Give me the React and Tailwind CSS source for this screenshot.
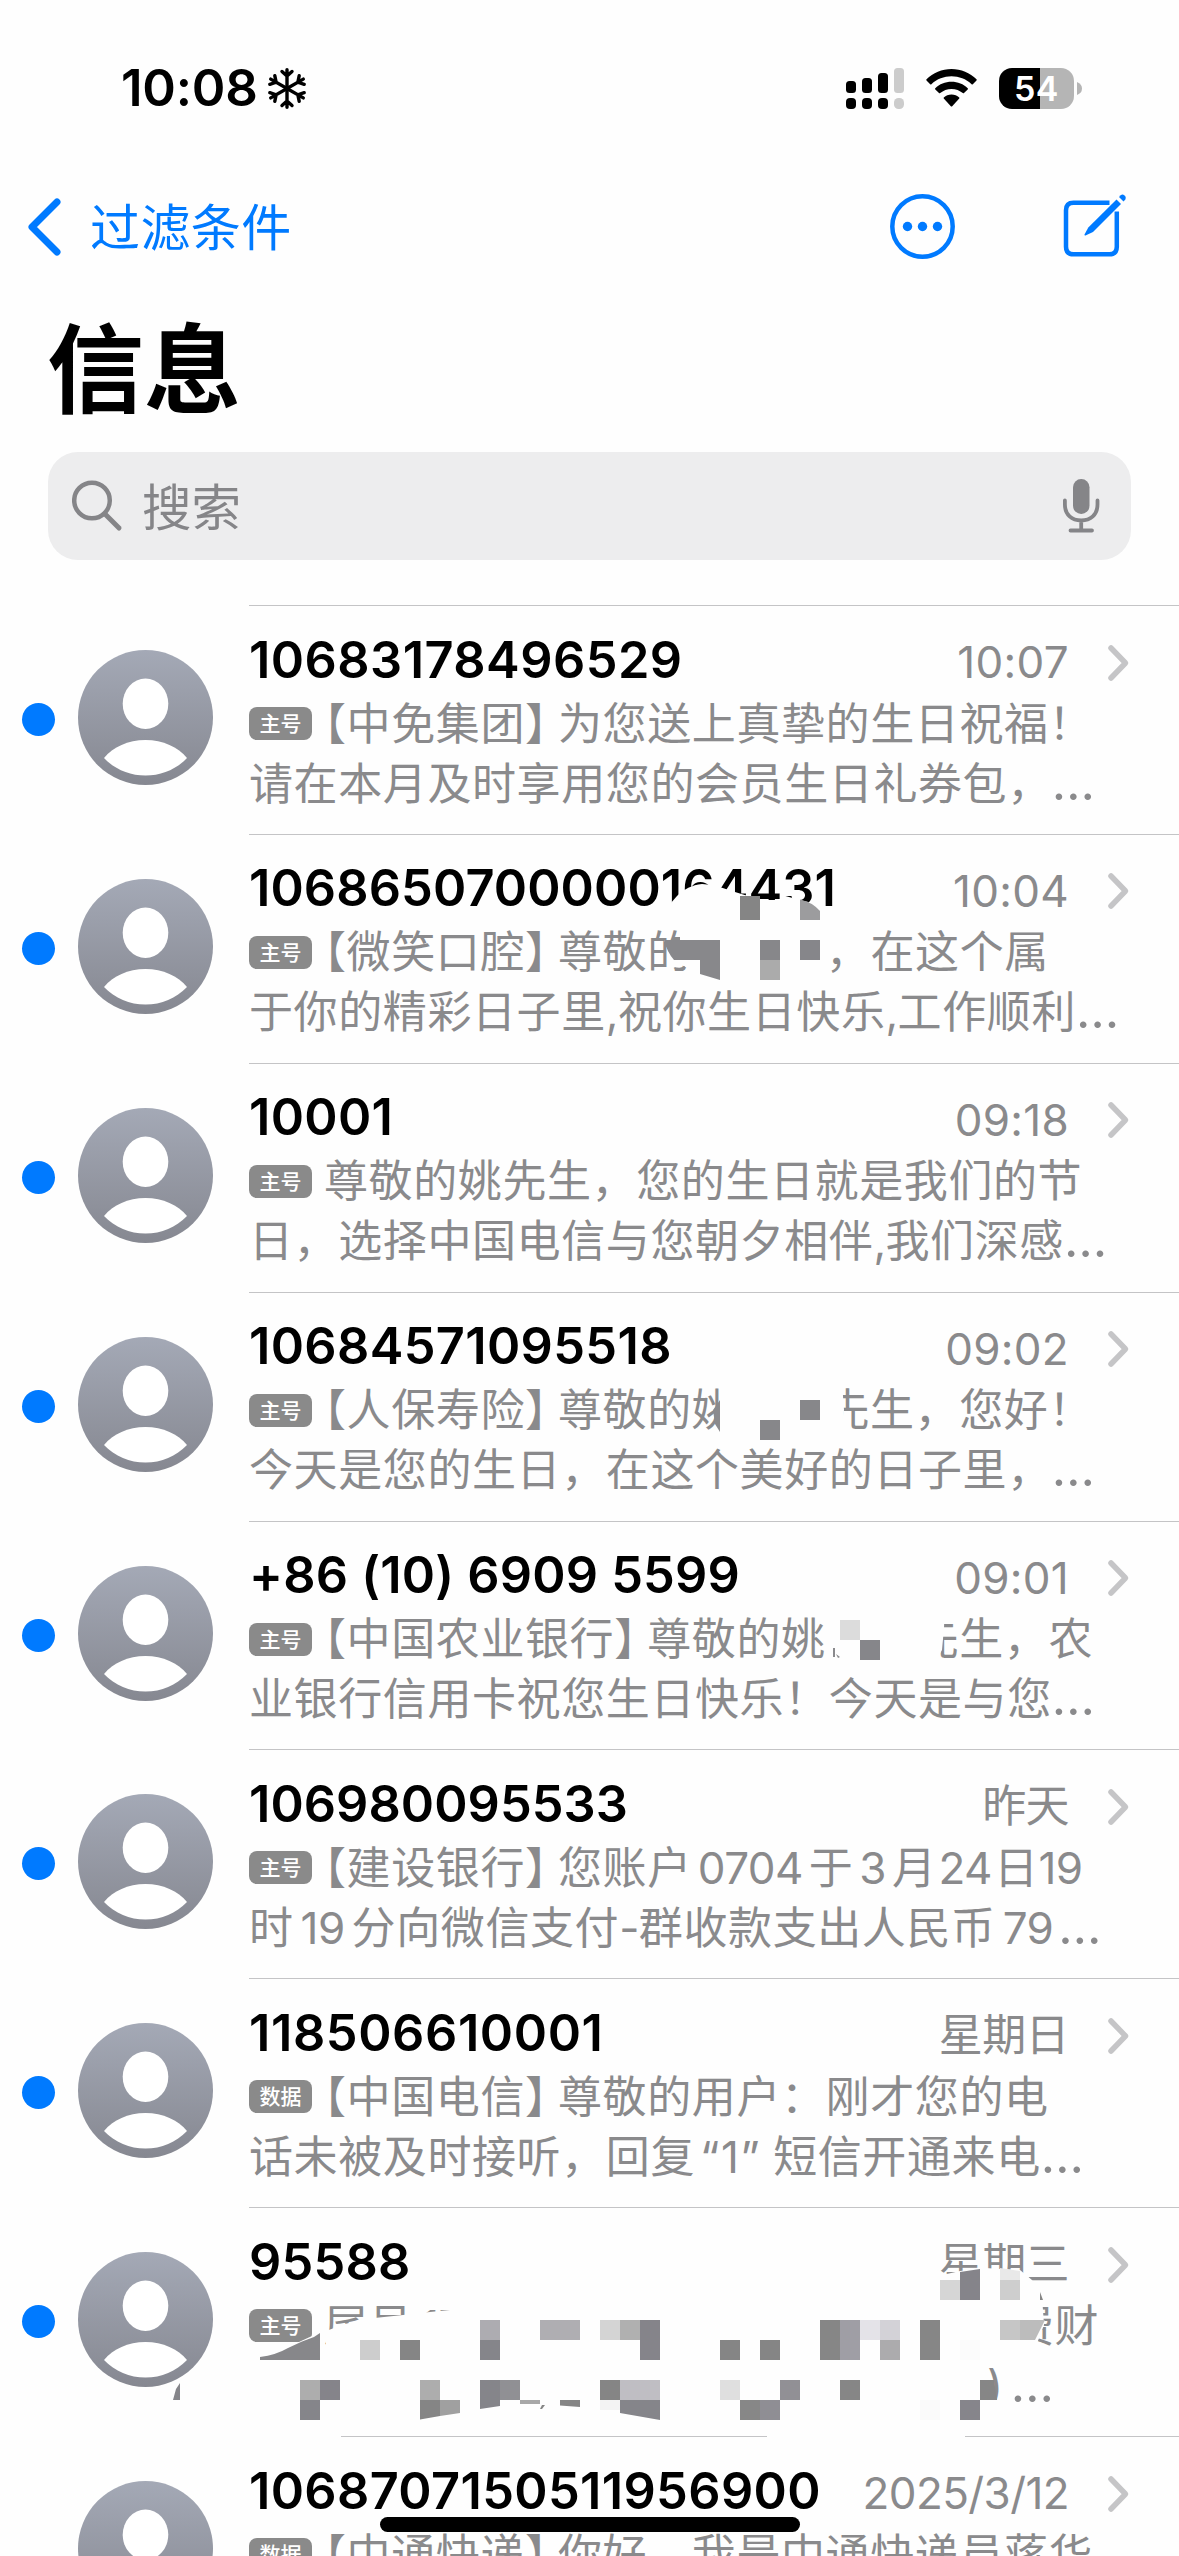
import React from "react";

const Cjk = ({ className = "", children }) => <span className={className}>{children}</span>;
// Latin digits inside a preview line, with a little air on both sides
const Num = ({ className = "", children }) => (
  <span className={"tracking-[-0.6px] " + className}>{children}</span>
);
const Gap = ({ className }) => <span className={"inline-block h-px " + className} />;
const Sender = ({ children }) => (
  <span className="-ml-[10px]">
    【{children}
    <span className="tracking-[-11px]">】</span>
  </span>
);
const More = () => <span className="text-[50px] leading-[0px]">…</span>;

const messages = [
  {
    name: "10683178496529",
    fit: "tracking-[0.45px]",
    time: "10:07",
    tag: "主号",
    first: <><Sender>中免集团</Sender>为您送上真挚的生日祝福！</>,
    second: <>请在本月及时享用您的会员生日礼券包，<More /></>,
  },
  {
    name: "1068650700000164431",
    fit: "tracking-[0.1px]",
    time: "10:04",
    tag: "主号",
    first: <><Sender>微笑口腔</Sender>尊敬的<Gap className="w-[134px]" />，在这个属</>,
    second: <>于你的精彩日子里<Num>,</Num>祝你生日快乐<Num>,</Num>工作顺利<More /></>,
  },
  {
    name: "10001",
    fit: "tracking-[0.3px]",
    time: "09:18",
    tag: "主号",
    first: <Cjk className="ml-[12px]">尊敬的姚先生，您的生日就是我们的节</Cjk>,
    second: <>日，选择中国电信与您朝夕相伴<Num>,</Num>我们深感<More /></>,
  },
  {
    name: "10684571095518",
    fit: "tracking-[0.35px]",
    time: "09:02",
    tag: "主号",
    first: <><Sender>人保寿险</Sender>尊敬的姚<Gap className="w-[89px]" />先生，您好！</>,
    second: <>今天是您的生日，在这个美好的日子里，<More /></>,
  },
  {
    name: "+86 (10) 6909 5599",
    fit: "tracking-[0.2px]",
    time: "09:01",
    tag: "主号",
    first: <><Sender>中国农业银行</Sender>尊敬的姚<Gap className="w-[89px]" />先生，农</>,
    second: <>业银行信用卡祝您生日快乐！今天是与您<More /></>,
  },
  {
    name: "106980095533",
    fit: "tracking-[0.05px]",
    time: "昨天",
    tag: "主号",
    first: <><Sender>建设银行</Sender>您账户<Num className="ml-[6px] mr-[6px]">0704</Num>于<Num className="mx-[6px]">3</Num>月<Num className="mx-[2px]">24</Num>日<Num>19</Num></>,
    second: <>时<Num className="mx-[7px]">19</Num>分向微信支付<Num>-</Num>群收款支出人民币<Num className="ml-[7px] mr-[5px]">79</Num><More /></>,
  },
  {
    name: "118506610001",
    fit: "tracking-[0.6px]",
    time: "星期日",
    tag: "数据",
    first: <><Sender>中国电信</Sender>尊敬的用户：刚才您的电</>,
    second: <>话未被及时接听，回复<span className="ml-[5px] mr-[12px] tracking-[1.5px]">“1”</span>短信开通来电<More /></>,
  },
  {
    name: "95588",
    fit: "tracking-[0.2px]",
    time: "星期三",
    tag: "主号",
    first: <><Cjk className="ml-[12px]">尾号</Cjk><Num className="ml-[8px]">17</Num><Gap className="w-[547px]" />费财</>,
    second: <><Gap className="w-[738px]" />)<Gap className="w-[7px]" /><More /></>,
  },
  {
    name: "1068707150511956900",
    fit: "tracking-[0.35px]",
    time: "2025/3/12",
    tag: "数据",
    read: true,
    first: <><Sender>中通快递</Sender>你好，我是中通快递员蒋华</>,
    second: null,
  },
];

function Avatar({ id }) {
  return (
    <svg className="ml-[23px] mt-[45px] h-[135px] w-[135px] shrink-0" viewBox="0 0 135 135">
      <defs>
        <linearGradient id={id} x1="0" y1="0" x2="0" y2="1">
          <stop offset="0" stopColor="#a4a9b6" />
          <stop offset="1" stopColor="#868891" />
        </linearGradient>
      </defs>
      <circle cx="67.5" cy="67.5" r="67.5" fill={`url(#${id})`} />
      <ellipse cx="67.5" cy="53.8" rx="22.8" ry="25.2" fill="#fff" />
      <path d="M26 108C35 97 50 90 67.5 90S100 97 109 108C98 119.500 83.500 125.500 67.500 125.500S37 119.500 26 108Z" fill="#fff" />
    </svg>
  );
}

function Row({ m, index }) {
  return (
    <li className="flex h-[228.9px] shrink-0">
      <div className="flex h-full w-[55px] shrink-0 items-center pl-[22px]">
        {!m.read && <span className="h-[33px] w-[33px] rounded-full bg-[#007aff]" />}
      </div>
      <Avatar id={"avatar" + index} />
      <div className="ml-[36px] min-w-0 flex-1 border-t border-[#c4c4c6] pt-[23.5px]">
        <div className="flex h-[60px] items-center">
          <h2 className={"flex-1 whitespace-nowrap text-[50.500px] font-semibold leading-[60px] text-black " + m.fit}>{m.name}</h2>
          <time className={"relative top-[2.500px] whitespace-nowrap text-[44px] leading-[60px] " + (m.time.includes(":") ? "tracking-[0.3px]" : "tracking-[-0.6px]")}>{m.time}</time>
          <svg className="relative top-[3px] ml-[38px] mr-[49px] h-[38px] w-[23px]" viewBox="0 0 23 38" fill="none" stroke="#c5c5c7" strokeWidth="5.500" strokeLinecap="round" strokeLinejoin="round">
            <path d="M4 4L18.500 19L4 34" />
          </svg>
        </div>
        <div className="mt-[4px] flex h-[60px] items-center whitespace-nowrap leading-[60px]">
          <span className="flex h-[33px] w-[63px] shrink-0 items-center justify-center rounded-[8px] bg-[#8a8a8a] text-[21px] font-medium leading-[33px] tracking-normal text-white">{m.tag}</span>
          <p className="whitespace-pre">{m.first}</p>
        </div>
        <p className="h-[60px] whitespace-pre leading-[60px]">{m.second}</p>
      </div>
    </li>
  );
}

const cells = [
  [740, 896, 20, 24, "#858585"], [760, 940, 20, 20, "#87878a"], [760, 960, 20, 20, "#ababab"], [800, 940, 20, 20, "#86868a"],
  [760, 1420, 20, 20, "#87878a"], [800, 1400, 20, 20, "#87878a"],
  [840, 1620, 20, 20, "#dcdcdc"], [860, 1640, 20, 20, "#86868a"],
  [360, 2340, 20, 20, "#cdcdcd"], [400, 2340, 20, 20, "#858585"], [480, 2320, 20, 20, "#adacb1"], [480, 2340, 20, 20, "#85858a"],
  [540, 2320, 40, 20, "#afaeb2"], [600, 2320, 20, 20, "#d4d4d4"], [620, 2320, 20, 20, "#b0b0b0"], [640, 2320, 20, 40, "#85848a"],
  [300, 2380, 20, 20, "#adadad"], [320, 2380, 20, 20, "#85848a"], [300, 2400, 20, 20, "#85858a"], [420, 2380, 20, 20, "#adadad"],
  [500, 2380, 20, 20, "#909094"], [520, 2400, 20, 4, "#a8a8a8"], [600, 2380, 20, 20, "#858585"], [620, 2380, 40, 20, "#bfbec3"],
  [600, 2400, 20, 10, "#f3f3f3"], [940, 2280, 20, 20, "#d6d6d6"], [1000, 2280, 20, 20, "#cecece"],
  [720, 2340, 20, 20, "#858585"], [760, 2340, 20, 20, "#858585"], [820, 2320, 20, 40, "#868686"], [840, 2320, 20, 40, "#9f9ea5"],
  [860, 2320, 20, 20, "#e4e3e8"], [880, 2320, 20, 20, "#d3d2d7"], [880, 2340, 20, 20, "#acabad"], [920, 2320, 20, 40, "#868686"],
  [1000, 2320, 20, 20, "#c6c6c6"], [720, 2380, 20, 20, "#dfdfdf"], [780, 2380, 20, 20, "#919095"], [740, 2400, 20, 20, "#878787"],
  [760, 2400, 20, 20, "#8f8e94"], [840, 2380, 20, 20, "#868686"], [960, 2400, 20, 20, "#86858b"],
  [960, 2340, 20, 20, "#fbfbfb"], [920, 2400, 20, 20, "#fafafa"],
];

// Hand-painted pixelation that hides private parts of some previews
function Pixelation() {
  return (
    <svg className="pointer-events-none absolute left-0 top-0 h-[2556px] w-[1179px]" viewBox="0 0 1179 2556">
      <g fill="#fefefe">
        <path d="M670 904L677 896C684 889 692 885 702 884C716 885 726 889 735 892L748 896V900H780L782 895L796 899L808 902L813 908V935H826V985H720L700 974L675 962L664 940H680V925H670Z" />
        <path d="M720 1382H842L844 1410L839 1446H720Z" />
        <path d="M828 1600H945L944 1628L942 1650L934 1664H828Z" />
        <path d="M326 2331L345 2324L365 2319L403 2315L430 2312L470 2308V2350H326Z" />
        <path d="M938 2276L960 2271L985 2268L1020 2270L1032 2280L1042 2296L1044 2325L1036 2346H1000V2300H938Z" />
        <path d="M980 2400H1004V2412H980Z" />
        <path d="M240 2432H341V2440H240ZM767 2432H965V2440H767Z" />
        <path d="M262 2357L280 2353L300 2341.500L312 2336L322 2331V2345H262Z" />
      </g>
      {cells.map(([x, y, w, h, fill]) => (
        <rect key={x + "-" + y} x={x} y={y} width={w} height={h} fill={fill} />
      ))}
      <path fill="#9c9c9e" d="M800 899.500Q812 902 820 911V920H800Z" />
      <path fill="#88888b" d="M664 940H720V980L700 974V960H674Q667 952 664 940Z" />
      <path fill="#8a8a8d" d="M674 967Q681 969 685 966L684 970Q678 972 674 967ZM713 1410L720 1400V1432L715 1424ZM833 1648L835 1648V1657L833 1657ZM836 1654L840 1657L838 1658Z" />
      <path fill="#87878a" d="M260 2357Q276 2355 288 2348L302 2341.500L314 2337L320 2333V2360H260Z" />
      <path fill="#858585" d="M420 2400H440V2416L420 2419.500ZM560 2400H580V2407L560 2405.500ZM545 2405L542 2409H540L542 2405Z" />
      <path fill="#a0a0a0" d="M440 2400H460V2413L440 2416Z" />
      <path fill="#85858a" d="M480 2380H500V2406L480 2409ZM620 2400H660V2420L620 2413ZM173 2400L176 2389L180 2383V2400Z" />
      <path fill="#85848a" d="M960 2272L980 2269V2300H960Z" />
      <path fill="#e9e9e9" d="M1000 2268L1020 2271V2280H1000Z" />
      <path fill="#bcbcbc" d="M1020 2320H1045L1035 2340H1020Z" />
      <path fill="#868686" d="M980 2380H994L997 2400H980ZM1040 2292L1043 2300H1040Z" />
    </svg>
  );
}

function StatusBar() {
  return (
    <div className="flex h-[176px] items-center">
      <div className="ml-[121px] w-[141px] whitespace-nowrap text-[51px] font-semibold leading-[60px] tracking-[-0.2px] text-black">10:08</div>
      <svg className="ml-[5px] h-[43px] w-[40px]" viewBox="-20 -21.500 40 43" fill="none" stroke="#000" strokeWidth="3.400" strokeLinecap="round" strokeLinejoin="round">
        {[0, 60, 120, 180, 240, 300].map((a) => (
          <path key={a} transform={`rotate(${a})`} d="M0 0V-18.800M-5 -17L0 -12.500L5 -17" />
        ))}
      </svg>
      <svg className="ml-[539px] h-[41px] w-[58px]" viewBox="0 0 58 41">
        <rect x="0" y="13" width="10" height="12" rx="3.500" />
        <rect x="16" y="10" width="10" height="15" rx="3.500" />
        <rect x="32" y="5" width="10" height="20" rx="3.500" />
        <rect x="48" y="0" width="10" height="25" rx="3.500" fill="#ccc" />
        <rect x="0" y="30" width="10" height="11" rx="4" />
        <rect x="16" y="30" width="10" height="11" rx="4" />
        <rect x="32" y="30" width="10" height="11" rx="4" />
        <rect x="48" y="30" width="10" height="11" rx="4.500" fill="#ccc" />
      </svg>
      <svg className="ml-[22px] h-[38px] w-[51px]" viewBox="0 0 51 38">
        <path d="M25.500 0C35 0 44 3.800 50.500 10.200Q51 10.800 50.500 11.400L46.800 15.200Q46.200 15.700 45.600 15.200C40 10 33 7.300 25.500 7.300S11 10 5.400 15.200Q4.800 15.700 4.200 15.200L.5 11.400Q0 10.800.5 10.200C7 3.800 16 0 25.500 0Z" />
        <path d="M25.500 12.800C31.800 12.800 37.500 15.200 41.700 19.200Q42.300 19.800 41.700 20.400L38 24.100Q37.400 24.600 36.800 24.100C33.700 21.400 29.800 19.900 25.500 19.900S17.300 21.400 14.200 24.100Q13.600 24.600 13 24.100L9.300 20.400Q8.700 19.800 9.300 19.200C13.500 15.200 19.200 12.800 25.500 12.800Z" />
        <path d="M25.500 25.500C28.500 25.500 31.200 26.600 33.200 28.400Q33.700 29 33.200 29.600L26.200 37.200Q25.500 37.900 24.800 37.200L17.800 29.600Q17.300 29 17.800 28.400C19.800 26.600 22.500 25.500 25.500 25.500Z" />
      </svg>
      <div className="ml-[22px] flex h-[41px] w-[75px] items-center justify-center rounded-[13px] bg-[linear-gradient(90deg,#000_0_41px,#b5b5b5_41px)] text-[34px] font-semibold leading-[41px] text-white">54</div>
      <svg className="ml-[3px] h-[13px] w-[5px]" viewBox="0 0 5 13">
        <path d="M0 0Q5 2 5 6.500T0 13Z" fill="#b5b5b5" />
      </svg>
    </div>
  );
}

export default function App() {
  return (
    <main className="relative h-[2556px] w-[1179px] overflow-hidden bg-[#fefefe] font-['Inter','Noto_Sans_CJK_SC',sans-serif] text-[44px] tracking-[0.6px] text-[#8a8a8c]">
      <StatusBar />
      <nav className="flex h-[101px] items-center text-[#007aff]">
        <svg className="ml-[26px] h-[60px] w-[37px]" viewBox="0 0 37 60" fill="none" stroke="currentColor" strokeWidth="7" strokeLinecap="round" strokeLinejoin="round">
          <path d="M31 5L6 30L31 55" />
        </svg>
        <span className="ml-[27px] mt-[3px] text-[50px] leading-[60px] tracking-[0.4px]">过滤条件</span>
        <svg className="ml-auto h-[65px] w-[65px]" viewBox="0 0 65 65" fill="none" stroke="currentColor" strokeWidth="4.500">
          <circle cx="32.500" cy="32.500" r="30.200" />
          <g fill="currentColor" stroke="none">
            <circle cx="17.500" cy="32.500" r="4.700" />
            <circle cx="32.500" cy="32.500" r="4.700" />
            <circle cx="47.500" cy="32.500" r="4.700" />
          </g>
        </svg>
        <svg className="ml-[106px] mr-[50px] h-[66px] w-[68px]" viewBox="0 0 68 66">
          <path d="M48.500 8.800H12.500Q5 8.800 5 16.300V52.800Q5 60.300 12.500 60.300H48.300Q55.800 60.300 55.800 52.800V17.500" fill="none" stroke="currentColor" strokeWidth="4.500" />
          <path d="M55.500 5.500L60 10L32 38L24.500 41.500Q23.200 41.700 23.500 40.500L27.300 33.500Z" fill="currentColor" />
          <path d="M58 3L59.700 1.300Q61.500 -.2 63.500 1.500T64.300 5.500L62.500 7.500Z" fill="currentColor" />
        </svg>
      </nav>
      <h1 className="ml-[47px] h-[175px] text-[97px] font-bold leading-[186px] tracking-[0px] text-black">信息</h1>
      <div className="ml-[48px] flex h-[108px] w-[1083px] items-center rounded-[30px] bg-[#ededee] text-[#858588]">
        <svg className="ml-[24px] h-[52px] w-[52px]" viewBox="0 0 52 52" fill="none" stroke="currentColor" strokeWidth="4.500" strokeLinecap="round">
          <circle cx="20" cy="20.500" r="17.800" />
          <path d="M33 34L47 48" strokeWidth="5" />
        </svg>
        <span className="ml-[18px] mt-[4px] text-[49.500px] leading-[60px] tracking-[0px]">搜索</span>
        <svg className="ml-auto mr-[31px] h-[54px] w-[38px]" viewBox="0 0 38 54" fill="none" stroke="currentColor" strokeWidth="3.800" strokeLinecap="round">
          <rect x="11" y="0" width="16.500" height="35" rx="8.200" fill="currentColor" stroke="none" />
          <path d="M2.900 21.500V25.500C2.900 36 10 41.500 19.200 41.500S35.500 36 35.500 25.500V21.500M19.200 42V51M8.500 51.500H30" />
        </svg>
      </div>
      <ul className="mt-[45px] flex flex-col">
        {messages.map((m, i) => (
          <Row key={m.name} m={m} index={i} />
        ))}
      </ul>
      <Pixelation />
      <div className="absolute left-[380px] top-[2517px] h-[15px] w-[420px] rounded-full bg-black" />
    </main>
  );
}
